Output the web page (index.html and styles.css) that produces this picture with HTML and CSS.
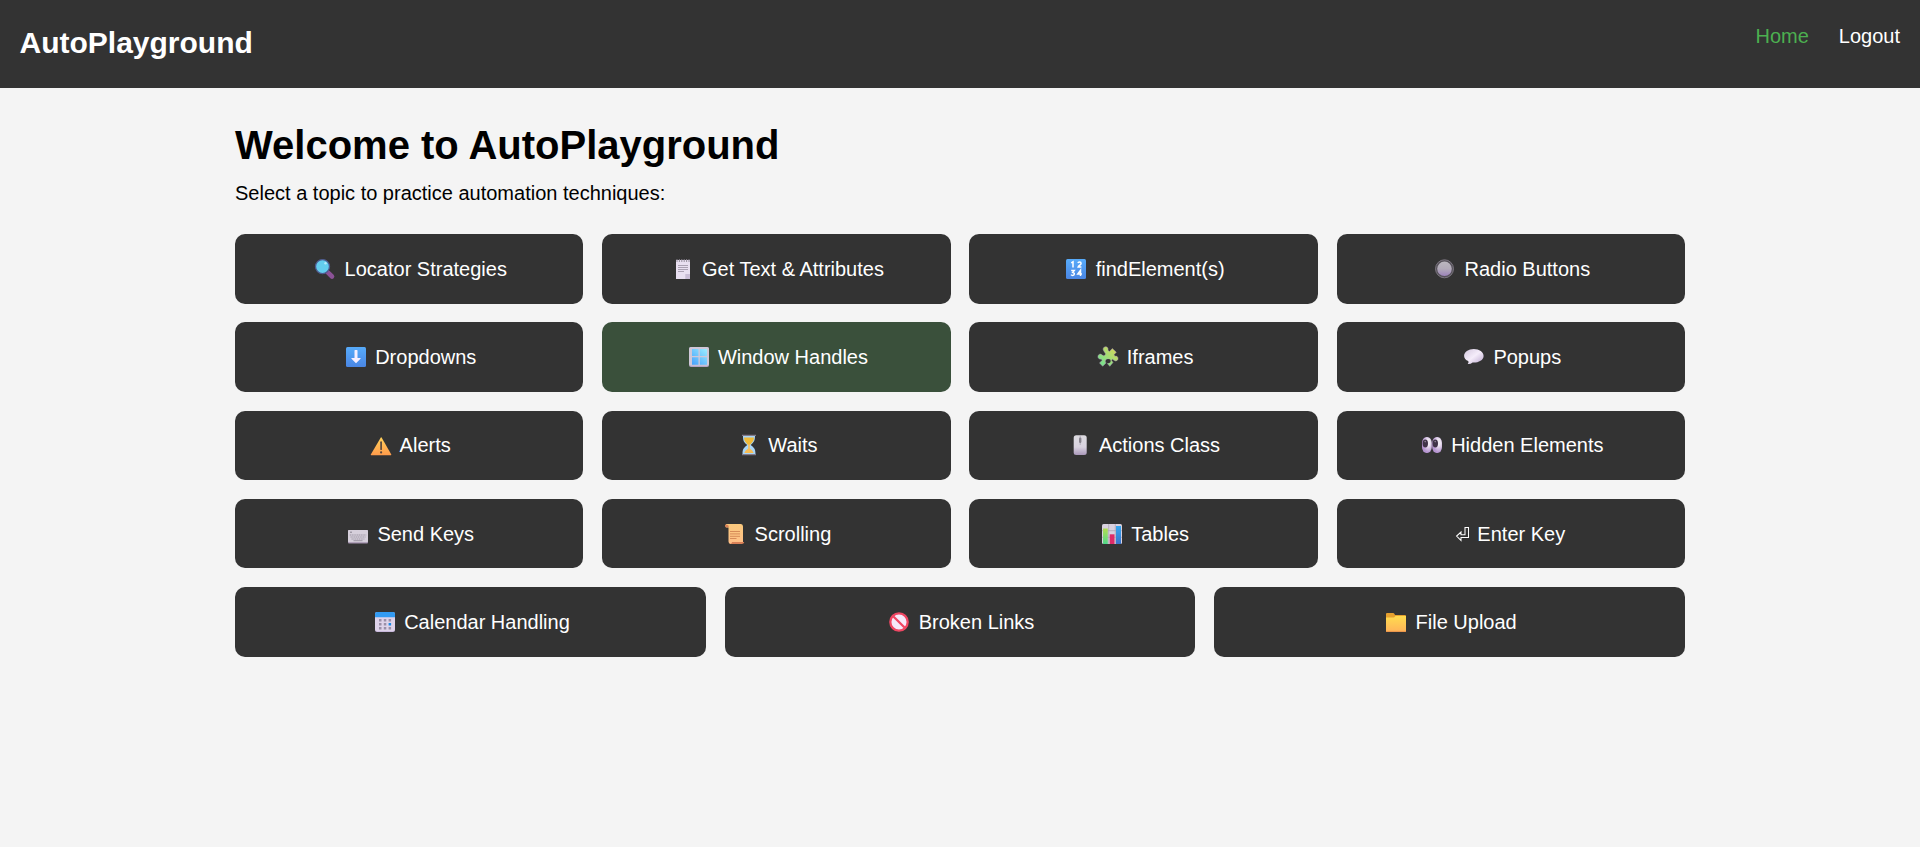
FILE: index.html
```html
<!DOCTYPE html>
<html lang="en">
<head>
<meta charset="utf-8">
<title>AutoPlayground</title>
<link rel="stylesheet" href="styles.css">
</head>
<body>
<header class="navbar">
  <div class="brand">AutoPlayground</div>
  <nav class="nav-links">
    <a class="nav-link active">Home</a>
    <a class="nav-link">Logout</a>
  </nav>
</header>
<main class="container">
  <h1 class="title">Welcome to AutoPlayground</h1>
  <p class="lead">Select a topic to practice automation techniques:</p>
  <div class="topics">
    <a class="topic"><svg class="icon" viewBox="0 0 20 20"><path d="M12.800 13.300L17 17.500" stroke="#8b5296" stroke-width="4.600" stroke-linecap="round"/><circle cx="7.500" cy="7.600" r="7" fill="#63cdee" stroke="#4f5a8f" stroke-width="1.300"/><circle cx="10.500" cy="4.300" r="1.200" fill="#b5ecfa"/></svg>Locator Strategies</a>
    <a class="topic"><svg class="icon" viewBox="0 0 20 20"><path d="M3 1h14v19H3z" fill="#e8dff0"/><path d="M12.300 15H17v5h-4.700z" fill="#c9bdd6"/><path d="M4 0v3M6.400 0v3M8.800 0v3M11.200 0v3M13.600 0v3M16 0v3" stroke="#8d8794" stroke-width=".9"/><path d="M5 6.500h10M5 8.500h10M5 10.500h10M5 12.500h6" stroke="#aaa1b2"/></svg>Get Text &amp; Attributes</a>
    <a class="topic"><svg class="icon" viewBox="0 0 20 20"><defs><linearGradient id="blue" x2="0" y2="1"><stop stop-color="#57abfa"/><stop offset="1" stop-color="#4a86e4"/></linearGradient></defs><rect width="20" height="20" rx="1.500" fill="url(#blue)"/><path d="M5.200 3.800L7 2.800V8.600M12 4.200C12.200 2.400 15.100 2.500 15.100 4.400C15.100 5.800 12.500 6.800 12.100 8.100H15.400M5.200 11.600H8.200L6.800 13.400C9 13.500 8.700 16.400 6.700 16.400Q5.600 16.400 5 15.600M14.500 17V11.400L11.800 15.100H16" fill="none" stroke="#fff" stroke-width="1.500"/></svg>findElement(s)</a>
    <a class="topic"><svg class="icon" viewBox="0 0 20 20"><defs><linearGradient id="radio" x2="0" y2="1"><stop stop-color="#bbb7bf"/><stop offset=".5" stop-color="#b2abb9"/><stop offset="1" stop-color="#9c82bb"/></linearGradient></defs><circle cx="9.500" cy="9.800" r="9" fill="#555159" stroke="#7c7681"/><circle cx="9.500" cy="9.800" r="7.300" fill="url(#radio)"/></svg>Radio Buttons</a>

    <a class="topic"><svg class="icon" viewBox="0 0 20 20"><rect width="20" height="20" rx="1.500" fill="url(#blue)"/><path d="M8.500 3.600Q8.500 3 9.100 3h1.800q.6 0 .6.6V11h2.800q.7.2.2.8L10 16.200 5.500 11.800q-.5-.6.2-.8h2.800z" fill="#f8efff"/></svg>Dropdowns</a>
    <a class="topic hovered"><svg class="icon" viewBox="0 0 20 20"><defs><linearGradient id="pane" gradientUnits="userSpaceOnUse" x1="3" y1="18" x2="18" y2="2"><stop stop-color="#45a0fb"/><stop offset="1" stop-color="#9bedff"/></linearGradient></defs><rect width="20" height="20" rx="2" fill="#b3a3c3"/><rect width="20" height="18.800" rx="2" fill="#cfc8d8"/><path d="M3 2h6.500v7H3zM10.800 2H18v7h-7.200zM3 10.200h6.500v7.500H3zM10.800 10.200H18v7.500h-7.200z" fill="url(#pane)"/></svg>Window Handles</a>
    <a class="topic"><svg class="icon" viewBox="0 0 20 20"><defs><linearGradient id="puzzle" x1="0" y1="1" x2="1" y2="0"><stop offset=".2" stop-color="#7de08a"/><stop offset="1" stop-color="#e5d452"/></linearGradient></defs><path d="M5.500 3.500A2.500 2.500 0 1 1 9.900 3.200L11.500 4.500 14.300 1.500 18.300 5.200 16 7.700 17 9.200A2.400 2.400 0 1 1 16 13.200L14.300 12 13.500 13.400 15 15.500 11.800 19.300 9.300 16.500A2.300 2.300 0 1 0 8 15.900L4.700 19.300 1.500 16 4.200 13.200 3.200 12A2.500 2.500 0 1 1 4 7.700L6 9 7.700 7.100z" fill="url(#puzzle)" stroke="#b49ac0" stroke-width=".45" stroke-linejoin="round"/><circle cx="10.800" cy="14" r="1.900" fill="#333"/><circle cx="5" cy="6.500" r="1.300" fill="#333"/></svg>Iframes</a>
    <a class="topic"><svg class="icon" viewBox="0 0 20 20"><defs><linearGradient id="bubble" x2="1" y2="1"><stop stop-color="#d4c8df"/><stop offset=".5" stop-color="#f5edfa"/><stop offset="1" stop-color="#b9a5cd"/></linearGradient></defs><path d="M9.800 2C15.300 2 19.600 5 19.600 9c0 4.600-6 7-11 6.500Q6.500 17.300 3.700 17q1.300-1 .6-2.900C1.700 13 .1 11.200.1 9 .1 5 4.500 2 9.800 2z" fill="url(#bubble)"/></svg>Popups</a>

    <a class="topic"><svg class="icon narrow" viewBox="0 0 20 20"><defs><linearGradient id="warn" x2="0" y2="1"><stop stop-color="#ffd15b"/><stop offset="1" stop-color="#ff9b4b"/></linearGradient></defs><path d="M10.800 2.500Q11.200 2 11.600 2.500L21.300 19.500Q21.300 20.200 20.800 20.200H1.300Q.5 20.200.8 19.500z" fill="url(#warn)"/><path d="M11.100 7.200v7" stroke="#57473f" stroke-width="1.700" stroke-linecap="round"/><circle cx="11.100" cy="17.400" r="1.100" fill="#57473f"/></svg>Alerts</a>
    <a class="topic"><svg class="icon" viewBox="0 0 20 20"><path d="M4 1h12c0 5-1.500 6.500-4.200 9C15 12.500 16.500 14 16.500 19h-13c0-5 1.500-6.500 4.700-9C5 7.500 4 6 4 1z" fill="#a9d5f6"/><path d="M5 2.500h10c-.2 4-2 5-4 7.500H9C7 7.500 5.200 6.500 5 2.500z" fill="#efba38"/><path d="M9.200 9h1.600v4.500q3 1.500 3.900 4.500H5.300q.9-3 3.900-4.500z" fill="#f7bd55"/><path d="M3 .4h14M3 19.700h14" stroke="#827a89" stroke-width="1.300"/></svg>Waits</a>
    <a class="topic"><svg class="icon narrow" viewBox="0 0 20 20"><defs><linearGradient id="mouse" x2="0" y2="1"><stop stop-color="#dddbe0"/><stop offset=".6" stop-color="#d8d2df"/><stop offset="1" stop-color="#aa98ba"/></linearGradient></defs><rect x="3.700" y=".2" width="13" height="19.800" rx="2.500" fill="url(#mouse)"/><path d="M10.200 0v10" stroke="#aaa5b1" stroke-width=".8"/><rect x="9" y="2.500" width="2.400" height="5.500" rx="1.200" fill="#87838d"/></svg>Actions Class</a>
    <a class="topic"><svg class="icon" viewBox="0 0 20 20"><defs><radialGradient id="eye" cx=".65" cy=".35" r=".6"><stop offset=".3" stop-color="#f0e9f3"/><stop offset="1" stop-color="#b594d0"/></radialGradient></defs><rect y="2" width="9.800" height="16" rx="4.500" ry="6" fill="url(#eye)"/><rect x="10.200" y="2" width="9.800" height="16" rx="4.500" ry="6" fill="url(#eye)"/><ellipse cx="3.300" cy="8.500" rx="2.700" ry="4.100" fill="#403448"/><ellipse cx="13.300" cy="8.500" rx="2.700" ry="4.100" fill="#403448"/><circle cx="3.200" cy="6.600" r=".8" fill="#8e8396"/><circle cx="13.200" cy="6.600" r=".8" fill="#8e8396"/></svg>Hidden Elements</a>

    <a class="topic"><svg class="icon" viewBox="0 0 20 20"><rect y="6" width="20" height="13.500" rx="1" fill="#a392ae"/><rect y="6" width="20" height="12.300" rx="1" fill="#d6cfdb"/><path d="M2 8.200h2" stroke="#89818e"/><path d="M1.800 11h16.400M2.500 13h15M3.500 15h13" stroke="#9d96a4" stroke-width="1.200" stroke-dasharray="1.300 .5"/><path d="M5.500 16.700h9" stroke="#9d96a4"/></svg>Send Keys</a>
    <a class="topic"><svg class="icon" viewBox="0 0 20 20"><defs><linearGradient id="paper" x2="0" y2="1"><stop stop-color="#fac97d"/><stop offset="1" stop-color="#ffbf87"/></linearGradient></defs><path d="M1.500.1H16q2 .2 2 2.500V18q-1 2-3 2H5.500q-2-.2-2-2.500V3.500H1Q-.5 1.500 1.500.1z" fill="url(#paper)"/><path d="M0 .7H2.500Q4 1.500 3.800 3.200H.8Q-.2 2 0 .7zM7 18h12.200q.2 1.500-2.200 2H5.200q1.800-.5 1.800-2z" fill="#d98057"/><path d="M5 7.500h10M5 9.900h10M5 12.300h10M5 14.500h6.500" stroke="#d68b58"/></svg>Scrolling</a>
    <a class="topic"><svg class="icon" viewBox="0 0 20 20"><defs><linearGradient id="bar-a" x2="0" y2="1"><stop stop-color="#b2dc51"/><stop offset="1" stop-color="#51d78b"/></linearGradient><linearGradient id="bar-b" x2="0" y2="1"><stop stop-color="#36a9f1"/><stop offset="1" stop-color="#3c72ca"/></linearGradient></defs><rect width="20" height="20" rx="1.500" fill="#d9d2e0"/><path d="M0 6.700h20M0 13.300h20M6.700 0v20M13.300 0v20" stroke="#aaa1b2" stroke-width=".7"/><path d="M1 4.500h4.800V20H1z" fill="url(#bar-a)"/><path d="M7.700 10.300h4.800V20H7.700z" fill="#de2b69"/><path d="M14 2h5v18h-5z" fill="url(#bar-b)"/></svg>Tables</a>
    <a class="topic"><svg class="icon return" viewBox="0 0 14 20"><path d="M9 3.500H12.500V13.500H5V16.500L.6 12 5 8V10.700H9z" fill="none" stroke="#fff" stroke-width="1.050"/></svg>Enter Key</a>

    <a class="topic"><svg class="icon" viewBox="0 0 20 20"><rect width="20" height="20" rx="2" fill="#c8b9dc"/><path d="M0 5h20v12q0 2-2 2H2q-2 0-2-2z" fill="#ded3ea"/><path d="M2 0h16q2 0 2 2v3.200H0V2Q0 0 2 0z" fill="#329bf3"/><path d="M4 7h2.500v2.500H4zM8.800 7h2.500v2.500H8.800zM13.600 7h2.500v2.500h-2.500zM4 11h2.500v2.500H4zM8.800 11h2.500v2.500H8.800zM4 15h2.500v2.500H4zM8.800 15h2.500v2.500H8.800zM13.600 15h2.500v2.500h-2.500z" fill="#9a8fa8"/><path d="M13.600 11h2.500v2.500h-2.500z" fill="#1b8ae6"/></svg>Calendar Handling</a>
    <a class="topic"><svg class="icon" viewBox="0 0 20 20"><circle cx="10" cy="10" r="8.700" fill="#f6eafa" stroke="#ef4763" stroke-width="2.300"/><path d="M4.200 4.200l11.600 11.600" stroke="#ef4763" stroke-width="2.300"/></svg>Broken Links</a>
    <a class="topic"><svg class="icon" viewBox="0 0 20 20"><defs><linearGradient id="folder" x2="0" y2="1"><stop stop-color="#ffdc4f"/><stop offset="1" stop-color="#ffb359"/></linearGradient></defs><path d="M0 2q0-1 1-1h6q1 0 1.500 1L9 3h10q1 0 1 1v6H0z" fill="#e5a02f"/><path d="M0 5.500h8L9.500 4H20v15q0 1-1 1H1q-1 0-1-1z" fill="url(#folder)"/><path d="M0 19.400h20" stroke="#e9944c"/></svg>File Upload</a>
  </div>
</main>
</body>
</html>
```

FILE: styles.css
```css
* {
  box-sizing: border-box;
}

body {
  margin: 0;
  background: #f4f4f4;
  color: #000;
  font: 20px "Liberation Sans", Arial, sans-serif;
}

.navbar {
  display: flex;
  justify-content: space-between;
  align-items: flex-start;
  height: 88px;
  padding: 25px 20px 0 19.5px;
  background: #333;
  color: #fff;
}

.brand {
  padding-top: 1px;
  font-size: 30px;
  font-weight: bold;
}

.nav-links {
  display: flex;
  gap: 30px;
}

.nav-link {
  color: #fff;
}

.nav-link.active {
  color: #4caf50;
}

.container {
  width: 1450px;
  margin: 0 auto;
  padding-top: 34px;
}

.title {
  margin: 0;
  font-size: 40px;
  line-height: 46px;
}

.lead {
  margin: 14px 0 29px;
  line-height: 23px;
}

.topics {
  display: flex;
  flex-wrap: wrap;
  gap: 18.75px;
}

.topic {
  display: flex;
  flex: 1 1 300px;
  align-items: center;
  justify-content: center;
  height: 69.5px;
  padding-top: 1px;
  border-radius: 10px;
  background: #333;
  color: #fff;
}

.topic.hovered {
  background: #3a503b;
}

.icon {
  width: 20px;
  height: 20px;
  margin: -1px 9.3px 0 3.8px;
  overflow: visible;
  fill: none;
}

.icon.narrow {
  margin-left: 2.6px;
}

.icon.return {
  width: 14px;
  margin: 0 7px 0 0;
}
```
